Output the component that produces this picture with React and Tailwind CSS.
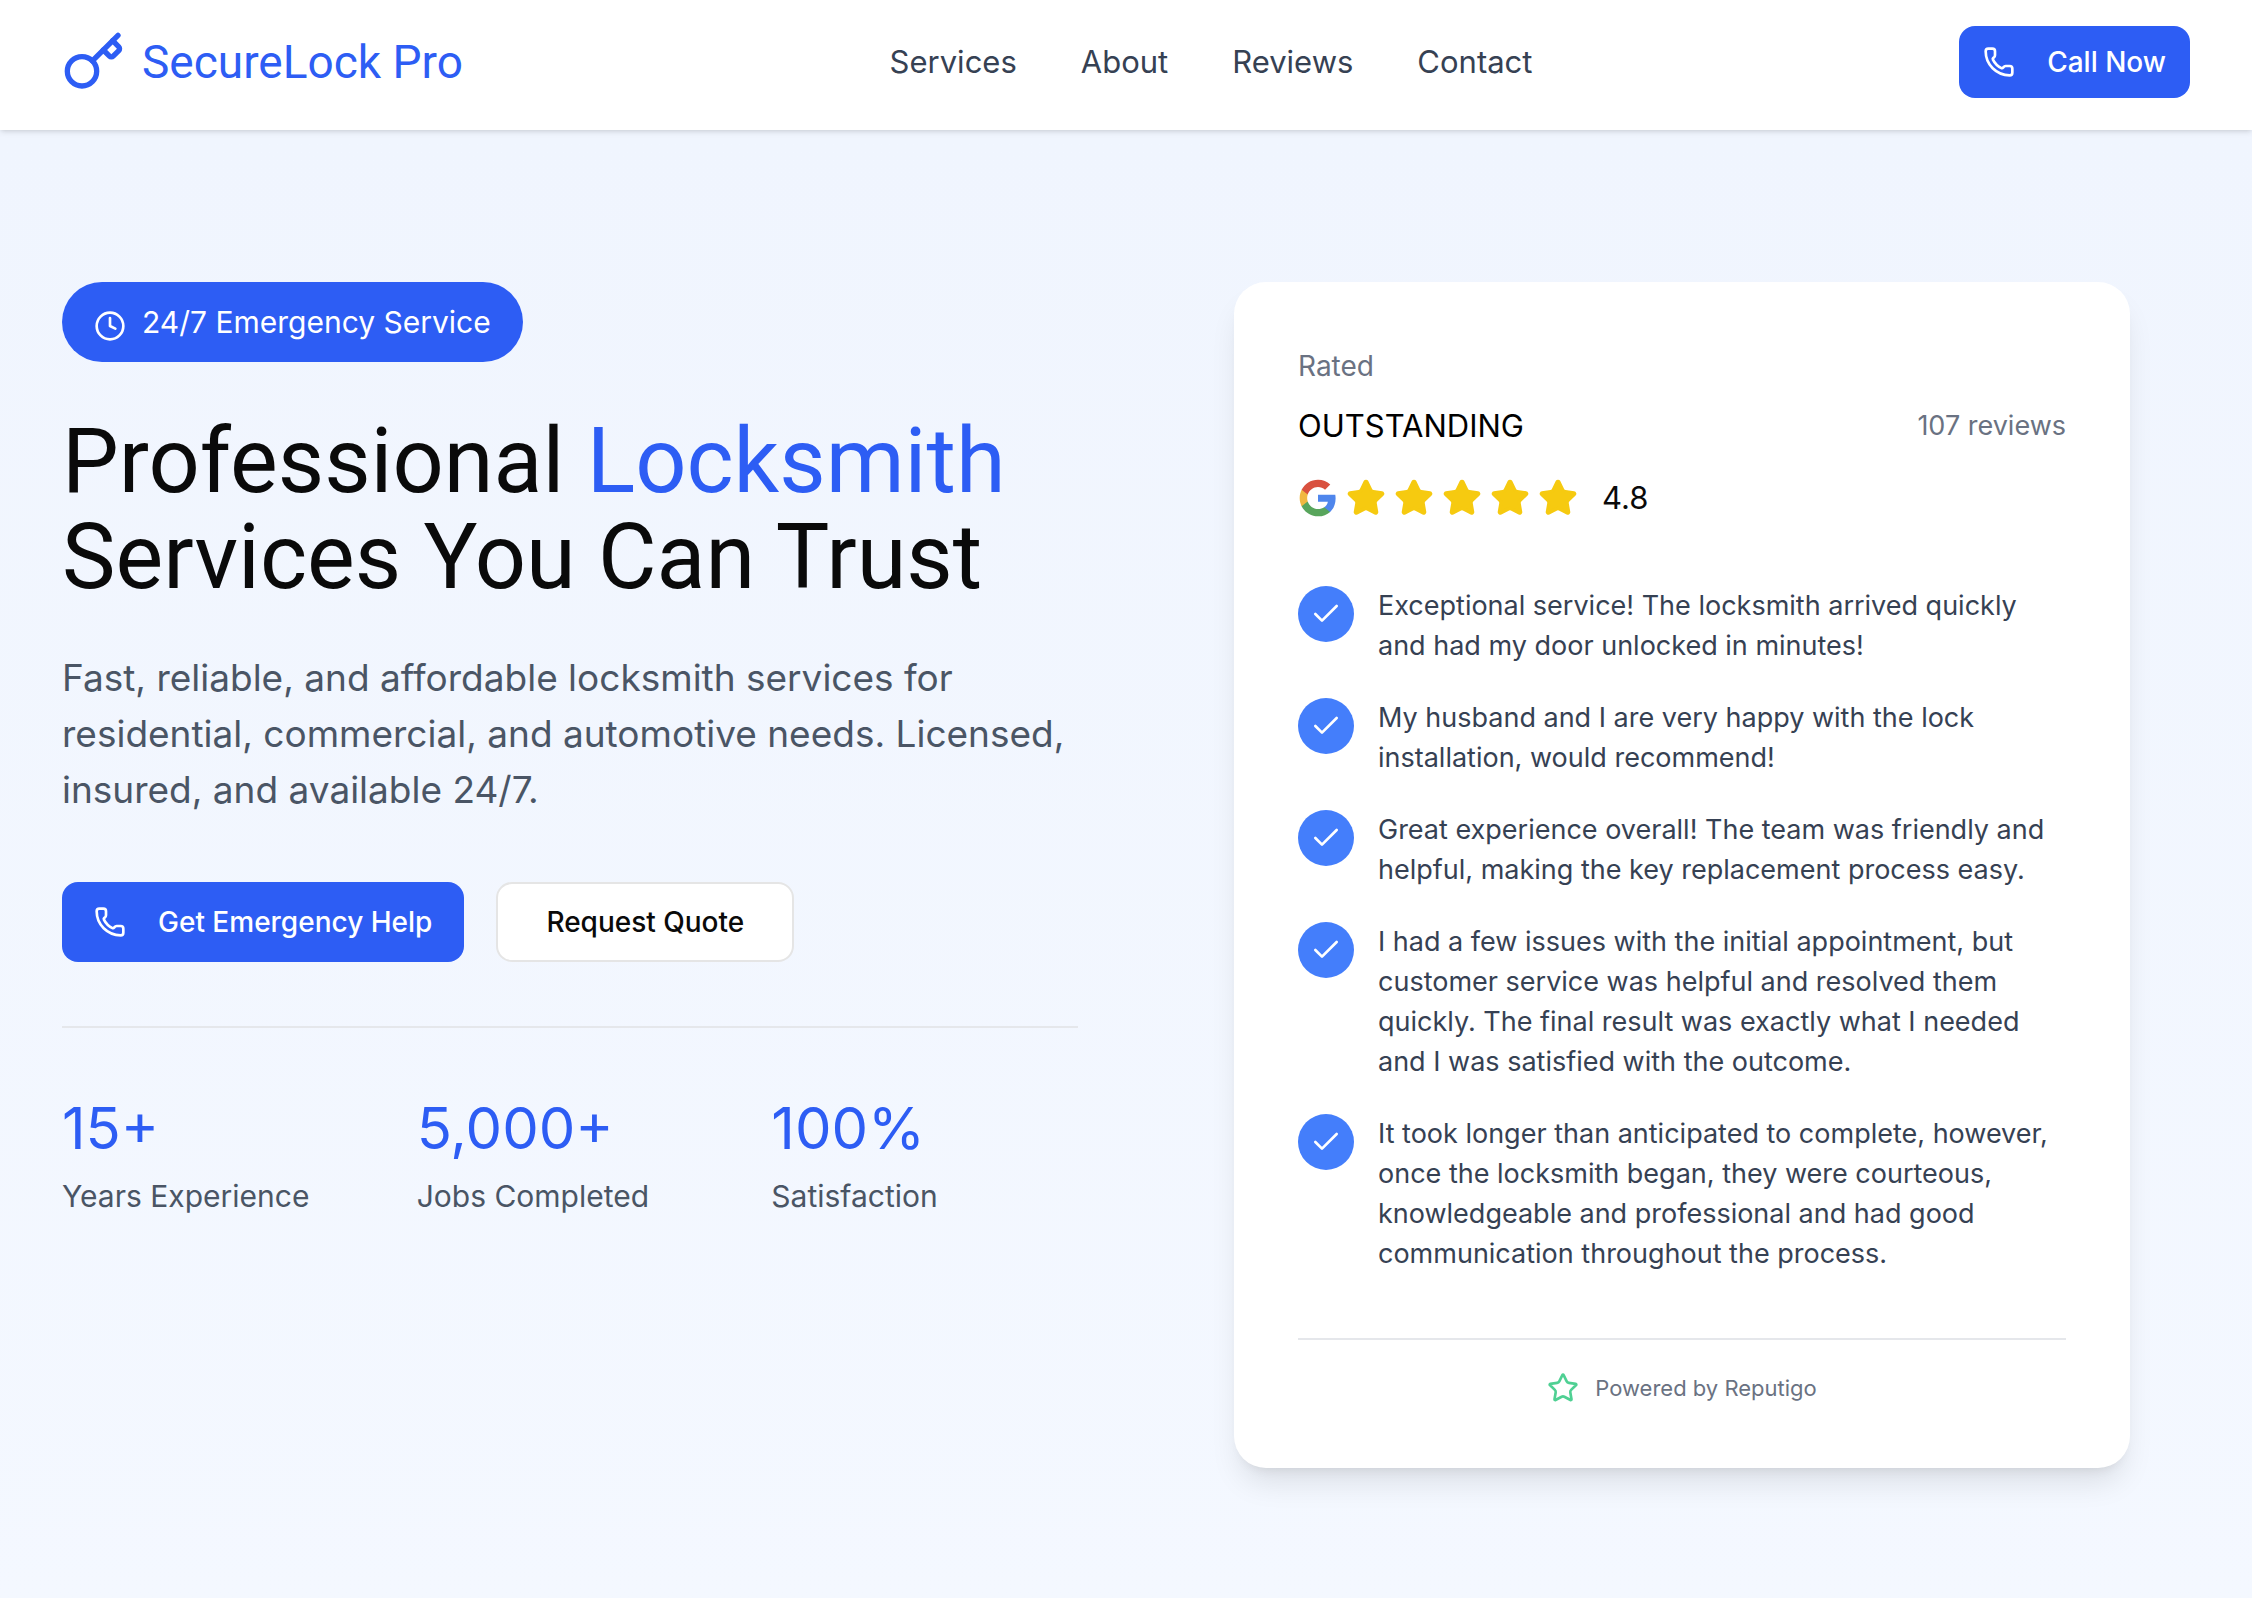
import { Key, Phone, Clock, Star, Check } from "lucide-react";

const navLinks = ["Services", "About", "Reviews", "Contact"];

const stats = [
  { value: "15+", label: "Years Experience" },
  { value: "5,000+", label: "Jobs Completed" },
  { value: "100%", label: "Satisfaction" },
];

const reviews = [
  "Exceptional service! The locksmith arrived quickly and had my door unlocked in minutes!",
  "My husband and I are very happy with the lock installation, would recommend!",
  "Great experience overall! The team was friendly and helpful, making the key replacement process easy.",
  "I had a few issues with the initial appointment, but customer service was helpful and resolved them quickly. The final result was exactly what I needed and I was satisfied with the outcome.",
  "It took longer than anticipated to complete, however, once the locksmith began, they were courteous, knowledgeable and professional and had good communication throughout the process.",
];

function GoogleIcon() {
  return (
    <svg viewBox="0 0 24 24" className="size-10 shrink-0" aria-hidden="true">
      <path fill="#4f86ec" d="M22.56 12.25c0-.78-.07-1.53-.2-2.25H12v4.26h5.92c-.26 1.37-1.04 2.53-2.21 3.31v2.77h3.57c2.08-1.92 3.28-4.74 3.28-8.09z" />
      <path fill="#58a55c" d="M12 23c2.97 0 5.46-.98 7.28-2.66l-3.57-2.77c-.98.66-2.23 1.06-3.71 1.06-2.86 0-5.29-1.93-6.16-4.53H2.18v2.84C3.99 20.53 7.7 23 12 23z" />
      <path fill="#f1b841" d="M5.84 14.09c-.22-.66-.35-1.36-.35-2.09s.13-1.43.35-2.09V7.07H2.18C1.43 8.55 1 10.22 1 12s.43 3.45 1.18 4.93l2.85-2.22.81-.62z" />
      <path fill="#d9513f" d="M12 5.38c1.62 0 3.06.56 4.21 1.64l3.15-3.15C17.45 2.09 14.97 1 12 1 7.7 1 3.99 3.47 2.18 7.07l3.66 2.84c.87-2.6 3.3-4.53 6.16-4.53z" />
    </svg>
  );
}

function Header() {
  return (
    <header className="relative flex items-center justify-between bg-white px-[62px] pt-[26px] pb-8 shadow-[0_2px_6px_rgba(0,0,0,0.1),0_2px_4px_-2px_rgba(0,0,0,0.1)]">
      <a href="#" className="flex h-[72px] items-center gap-4 text-[#2d5df4]">
        <Key className="size-16" />
        <span className="font-['Roboto',sans-serif] text-[46px] leading-[64px]">SecureLock Pro</span>
      </a>

      <nav className="flex gap-16">
        {navLinks.map((link) => (
          <a key={link} href={`#${link.toLowerCase()}`} className="text-[31px] leading-12 text-[#364153]">
            {link}
          </a>
        ))}
      </nav>

      <button className="flex h-[72px] items-center gap-8 rounded-2xl bg-[#2d5df4] px-6 text-[28px] leading-10 font-medium text-white">
        <Phone className="size-8" />
        Call Now
      </button>
    </header>
  );
}

function ReviewCard() {
  return (
    <div className="mx-auto w-full max-w-[896px] rounded-[32px] bg-white p-16 shadow-[0_20px_30px_-6px_rgba(0,0,0,0.1),0_8px_12px_-8px_rgba(0,0,0,0.1)]">
      <p className="text-[28px] leading-10 text-[#6a7282]">Rated</p>
      <div className="mt-4 flex items-center justify-between">
        <h2 className="text-[31px] leading-12 text-black">OUTSTANDING</h2>
        <span className="text-[27px] leading-10 text-[#6a7282]">107 reviews</span>
      </div>

      <div className="mt-6 flex items-center gap-2">
        <GoogleIcon />
        {[1, 2, 3, 4, 5].map((n) => (
          <Star key={n} className="size-10 fill-[#f6ca10] text-[#f6ca10]" />
        ))}
        <span className="ml-4 text-[31px] leading-12 text-neutral-950">4.8</span>
      </div>

      <ul className="mt-16 space-y-8">
        {reviews.map((review) => (
          <li key={review} className="flex items-start gap-6">
            <span className="flex size-14 shrink-0 items-center justify-center rounded-full bg-[#447efb]">
              <Check className="size-8 text-white" />
            </span>
            <p className="text-[27px] leading-10 text-[#364153]">{review}</p>
          </li>
        ))}
      </ul>

      <div className="mt-16 flex items-center justify-center gap-4 border-t-2 border-gray-200 pt-8">
        <Star className="size-8 text-[#4fd093]" />
        <span className="text-[22px] leading-8 text-[#6a7282]">Powered by Reputigo</span>
      </div>
    </div>
  );
}

export default function App() {
  return (
    <div className="flex min-h-screen flex-col bg-white font-['Inter',sans-serif]">
      <Header />

      <main className="grid flex-1 grid-cols-2 items-start gap-24 bg-linear-to-b from-[#f0f5fe] to-[#f4f8ff] px-[62px] pt-[152px] pb-[130px]">
        <div>
          <div className="inline-flex h-20 items-center gap-4 rounded-full bg-[#2d5df4] px-8 text-white">
            <Clock className="mt-2 size-8" />
            <span className="text-[30px] leading-12">24/7 Emergency Service</span>
          </div>

          <h1 className="mt-[52px] font-['Roboto',sans-serif] text-[90px] leading-24 text-neutral-950">
            Professional <span className="text-[#2d5df4]">Locksmith</span>
            <br />
            Services You Can Trust
          </h1>

          <p className="mt-11 text-[37px] leading-14 text-[#4a5565]">
            Fast, reliable, and affordable locksmith services for residential, commercial, and automotive needs. Licensed, insured, and available 24/7.
          </p>

          <div className="mt-16 flex gap-8">
            <button className="flex h-20 items-center gap-8 rounded-2xl bg-[#2d5df4] px-8 text-[28px] leading-10 font-medium text-white">
              <Phone className="size-8" />
              Get Emergency Help
            </button>
            <button className="h-20 rounded-2xl border-2 border-[#e5e5e5] bg-white px-12 text-[28px] leading-10 font-medium text-neutral-950">
              Request Quote
            </button>
          </div>

          <div className="mt-16 grid grid-cols-3 gap-12 border-t-2 border-gray-200 pt-16">
            {stats.map((stat) => (
              <div key={stat.label}>
                <div className="text-[58px] leading-[72px] text-[#2d5df4]">{stat.value}</div>
                <div className="mt-2 text-[30px] leading-12 text-[#4a5565]">{stat.label}</div>
              </div>
            ))}
          </div>
        </div>

        <ReviewCard />
      </main>
    </div>
  );
}
